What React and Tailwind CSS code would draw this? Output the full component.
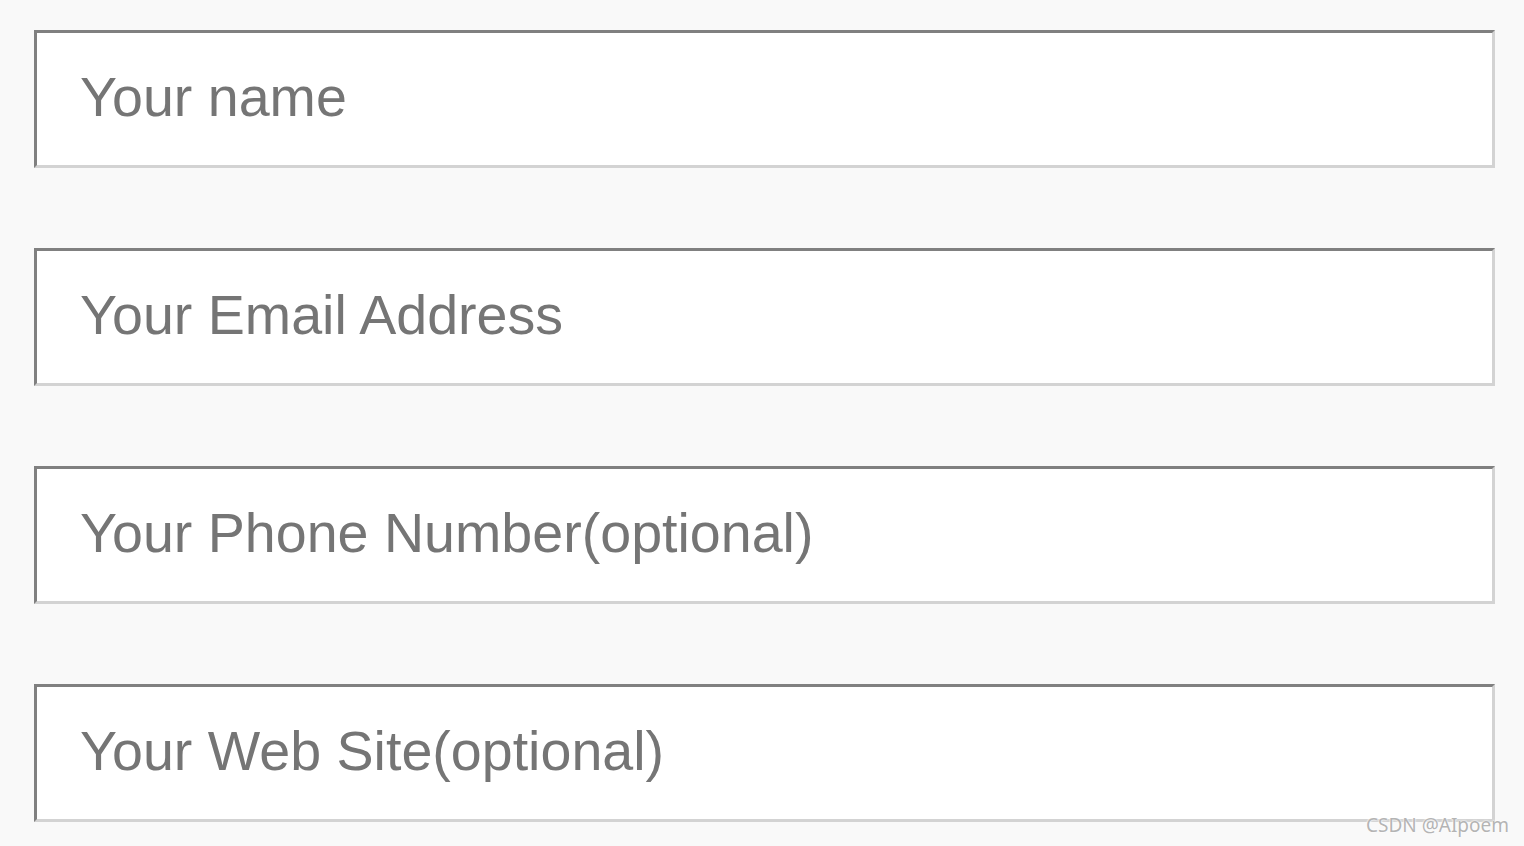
import React from 'react';

const fields = [
  'Your name',
  'Your Email Address',
  'Your Phone Number(optional)',
  'Your Web Site(optional)',
];

const App = () => {
  return (
    <div className="relative w-[1524px] h-[846px] overflow-hidden bg-[#f9f9f9] pt-[30px] pl-[34px]">
      <form className="flex flex-col gap-[80px] w-[1461px]">
        {fields.map((label) => (
          <input
            key={label}
            type="text"
            placeholder={label}
            className="h-[138px] w-full bg-white border-[3px] border-t-[#808080] border-l-[#808080] border-b-[#d3d3d3] border-r-[#d3d3d3] pl-[43px] pb-[4px] text-[55.6px] text-[#757575] placeholder:text-[#757575] outline-none font-['Liberation_Sans',Arial,sans-serif]"
          />
        ))}
      </form>
      <span className="absolute right-[15px] bottom-[11px] text-[19px] leading-none text-[#b4b4b4] font-['Noto_Sans',sans-serif] [text-shadow:0_0_2px_#fff,0_0_2px_#fff]">
        CSDN @AIpoem
      </span>
    </div>
  );
};

export default App;
